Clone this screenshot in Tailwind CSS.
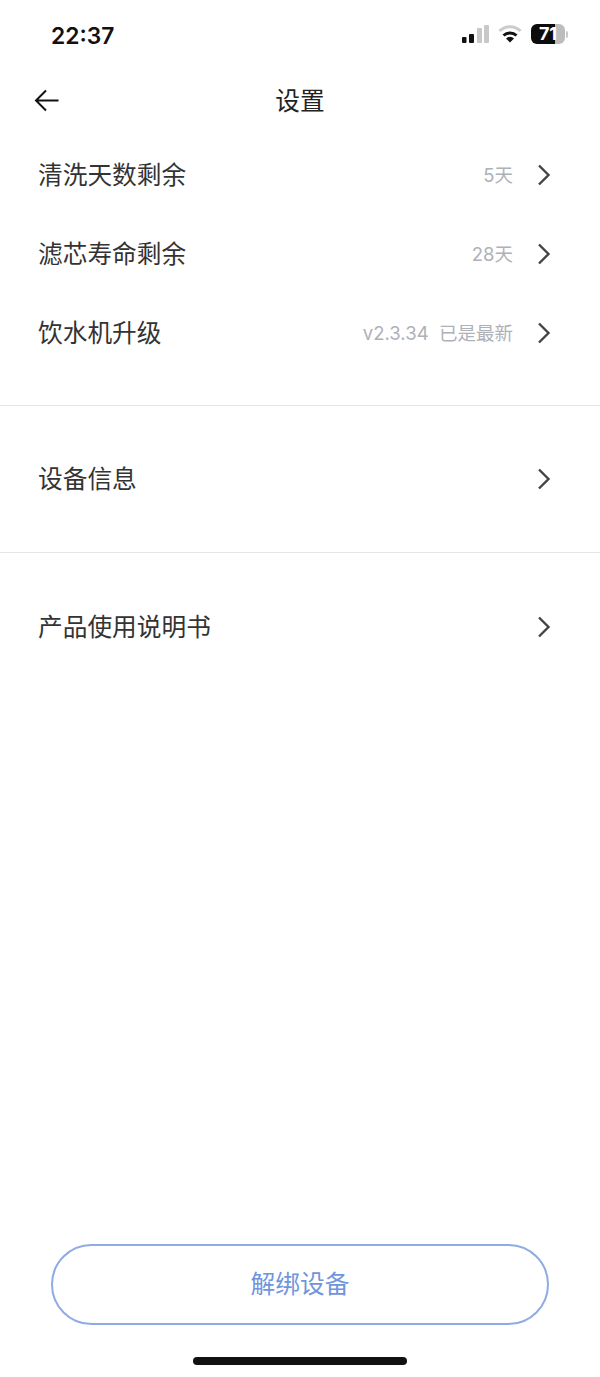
<!DOCTYPE html>
<html lang="zh">
<head>
    <meta charset="UTF-8">
    <meta name="viewport" content="width=device-width, initial-scale=1.0">
    <title>设置</title>
    <script src="https://cdn.jsdelivr.net/npm/@tailwindcss/browser@4"></script>
</head>
<body class="bg-white text-[#333333] font-['Inter','Noto_Sans_CJK_SC',sans-serif]">
<div class="w-[600px] h-[1377px] flex flex-col overflow-hidden">

    <!-- status bar -->
    <div class="h-[68px] pl-[51px] pr-[32px] pt-[21px] flex justify-between items-start">
        <span class="text-[22.8px] leading-[29px] font-semibold text-[#111111]">22:37</span>
        <div class="flex items-center gap-[9px] pt-[3px]">
            <svg width="28" height="20" viewBox="0 0 28 20">
                <rect x="1" y="13" width="4.5" height="6" rx="1" fill="#111"/>
                <rect x="8" y="10" width="5" height="9" rx="1" fill="#111"/>
                <rect x="16" y="4" width="5" height="15" rx="1" fill="#c8c8c8"/>
                <rect x="23" y="1" width="5" height="18" rx="1" fill="#c8c8c8"/>
            </svg>
            <svg width="24" height="18" viewBox="0 0 24 18" fill="none" stroke-width="3">
                <path d="M1.5 6a15 15 0 0 1 21 0" stroke="#cccccc"/>
                <path d="M5.5 10.5a9.5 9.5 0 0 1 13 0" stroke="#111"/>
                <path d="M12 17.5l-4-4a5.6 5.6 0 0 1 8 0z" fill="#111"/>
            </svg>
            <div class="flex items-center">
                <div class="w-[34px] h-[20px] rounded-[6px] bg-[linear-gradient(90deg,#0c0c0c_71%,#bdbdbd_71%)] flex items-center justify-center text-white text-[18px] font-bold leading-none">71</div>
                <div class="w-[2px] h-[7px] ml-[1px] bg-[#c8c8c8] rounded-r-sm"></div>
            </div>
        </div>
    </div>

    <!-- header -->
    <div class="relative h-[67px] flex items-center justify-center">
        <svg class="absolute left-[34px] top-[20px]" width="26" height="25" viewBox="0 0 26 25" fill="none" stroke="#111" stroke-width="2">
            <path d="M24.5 12.5H3M12 2.5L2 12.5l10 10"/>
        </svg>
        <span class="text-[24.7px] text-[#222222]">设置</span>
    </div>

    <!-- rows -->
    <div class="h-[79px] pl-[38px] pr-[49px] flex items-center justify-between">
        <span class="text-[24.7px] pt-[2px]">清洗天数剩余</span>
        <div class="flex items-center gap-[24px]">
            <span class="text-[18.5px] text-[#aeb1b8] pt-[2px]">5天</span>
            <svg width="14" height="22" viewBox="0 0 14 22" fill="none" stroke="#444" stroke-width="2.4"><path d="M2 1.5l9.5 9.5L2 20.5"/></svg>
        </div>
    </div>
    <div class="h-[79px] pl-[38px] pr-[49px] flex items-center justify-between">
        <span class="text-[24.7px] pt-[2px]">滤芯寿命剩余</span>
        <div class="flex items-center gap-[24px]">
            <span class="text-[18.5px] text-[#aeb1b8] pt-[2px]">28天</span>
            <svg width="14" height="22" viewBox="0 0 14 22" fill="none" stroke="#444" stroke-width="2.4"><path d="M2 1.5l9.5 9.5L2 20.5"/></svg>
        </div>
    </div>
    <div class="h-[79px] pl-[38px] pr-[49px] flex items-center justify-between">
        <span class="text-[24.7px] pt-[2px]">饮水机升级</span>
        <div class="flex items-center gap-[24px]">
            <span class="text-[18.5px] text-[#aeb1b8] pt-[2px]">v2.3.34&nbsp; 已是最新</span>
            <svg width="14" height="22" viewBox="0 0 14 22" fill="none" stroke="#444" stroke-width="2.4"><path d="M2 1.5l9.5 9.5L2 20.5"/></svg>
        </div>
    </div>

    <div class="mt-[33px] h-[148px] border-y border-[#e5e5e5] pl-[38px] pr-[49px] flex items-center justify-between">
        <span class="text-[24.7px] pt-[2px]">设备信息</span>
        <svg width="14" height="22" viewBox="0 0 14 22" fill="none" stroke="#444" stroke-width="2.4"><path d="M2 1.5l9.5 9.5L2 20.5"/></svg>
    </div>

    <div class="h-[147px] pl-[38px] pr-[49px] flex items-center justify-between">
        <span class="text-[24.7px] pt-[2px]">产品使用说明书</span>
        <svg width="14" height="22" viewBox="0 0 14 22" fill="none" stroke="#444" stroke-width="2.4"><path d="M2 1.5l9.5 9.5L2 20.5"/></svg>
    </div>

    <!-- bottom -->
    <div class="mt-auto flex flex-col items-center pb-[12px]">
        <button class="w-[498px] h-[81px] rounded-full border-2 border-[#8fabe4] text-[#6f95dd] text-[24.7px]">解绑设备</button>
        <div class="mt-[32px] w-[214px] h-[8px] rounded-full bg-[#111111]"></div>
    </div>
</div>
</body>
</html>
